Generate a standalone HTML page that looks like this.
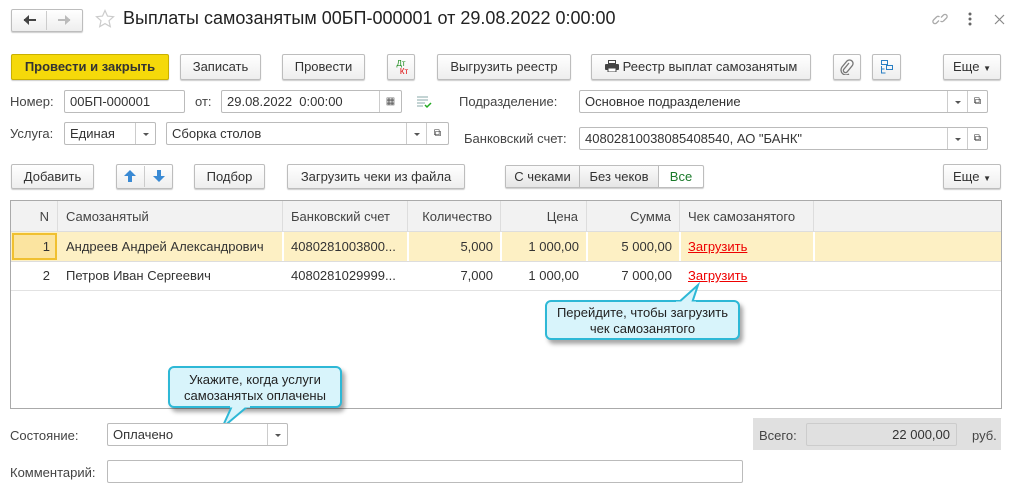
<!DOCTYPE html>
<html><head><meta charset="utf-8"><style>
*{box-sizing:border-box}
body{margin:0;width:1021px;height:488px;background:#fff;font-family:"Liberation Sans",Arial,sans-serif;font-size:13px;color:#333;position:relative;overflow:hidden}
.a{position:absolute}
.btn{position:absolute;border:1px solid #bdbdbd;border-radius:2px;background:linear-gradient(#fff,#eee);box-shadow:0 1px 1px rgba(0,0,0,.2);text-align:center;color:#333;font-size:13px}
.inp{position:absolute;border:1px solid #bbb;border-radius:2px;background:#fff;padding:3px 0 0 5px;font-size:13px;color:#333;white-space:nowrap}
.dd{position:absolute;top:0;bottom:0;border-left:1px solid #ccc;width:20px}
.dd:after{content:"";position:absolute;left:7px;top:10px;border:3px solid transparent;border-top:3px solid #555}
.lb{position:absolute;color:#444;font-size:13px}
.th{position:absolute;top:0;height:31px;line-height:31px;border-right:1px solid #ddd;padding:0 8px;color:#444}
.td{position:absolute;height:29px;line-height:29px;padding:0 8px;color:#333}
.tip{position:absolute;background:#d8f4fb;border:2px solid #2eb8d6;border-radius:6px;box-shadow:3px 4px 4px rgba(0,0,0,.35);text-align:center;color:#222;font-size:13px;line-height:16px}
</style></head><body>
<!-- header -->
<div class="btn" style="left:11px;top:9px;width:72px;height:23px;"></div>
<div class="a" style="left:46px;top:11px;width:1px;height:19px;background:#ccc"></div>
<svg class="a" style="left:23px;top:14px" width="14" height="12"><path d="M1 6h12" stroke="#444" stroke-width="2"/><path d="M0.5 6L6 1v10z" fill="#444"/></svg>
<svg class="a" style="left:57px;top:14px" width="14" height="12"><path d="M1 6h12" stroke="#bbb" stroke-width="2"/><path d="M13.5 6L8 1v10z" fill="#bbb"/></svg>
<svg class="a" style="left:95px;top:9px" width="20" height="20"><path d="M10 1.5l2.5 5.6 6 .6-4.5 4 1.3 6-5.3-3.1-5.3 3.1 1.3-6-4.5-4 6-.6z" fill="none" stroke="#ccc" stroke-width="1.2"/></svg>
<div class="a" style="left:123px;top:8px;font-size:18px;color:#222">Выплаты самозанятым 00БП-000001 от 29.08.2022 0:00:00</div>
<svg class="a" style="left:932px;top:11px" width="16" height="16"><g fill="none" stroke="#aaa" stroke-width="1.3"><path d="M7 9.5l-2.5 2.5a2 2 0 0 1-3-3l3-3a2 2 0 0 1 3 0"/><path d="M9 6.5l2.5-2.5a2 2 0 0 1 3 3l-3 3a2 2 0 0 1-3 0"/></g></svg>
<svg class="a" style="left:968px;top:12px" width="4" height="14"><circle cx="2" cy="2" r="1.5" fill="#666"/><circle cx="2" cy="7" r="1.5" fill="#666"/><circle cx="2" cy="12" r="1.5" fill="#666"/></svg>
<svg class="a" style="left:994px;top:14px" width="11" height="11"><path d="M1 1l9 9M10 1l-9 9" stroke="#888" stroke-width="1.2"/></svg>
<!-- toolbar -->
<div class="btn" style="left:11px;top:54px;width:158px;height:26px;line-height:24px;background:#f5d90a;border-color:#c9b000;font-weight:bold;color:#333">Провести и закрыть</div>
<div class="btn" style="left:180px;top:54px;width:81px;height:26px;line-height:24px">Записать</div>
<div class="btn" style="left:282px;top:54px;width:83px;height:26px;line-height:24px">Провести</div>
<div class="btn" style="left:387px;top:54px;width:28px;height:26px;font-size:8px;line-height:8px;padding-top:5px"><span style="color:#1a8a1a">Дт</span><br><span style="color:#d00;margin-left:6px">Кт</span></div>
<div class="btn" style="left:437px;top:54px;width:134px;height:26px;line-height:24px">Выгрузить реестр</div>
<div class="btn" style="left:591px;top:54px;width:220px;height:26px;line-height:24px"><svg width="14" height="12" style="vertical-align:-1px;margin-right:4px"><rect x="3.5" y="0.5" width="7" height="3" fill="none" stroke="#444"/><rect x="0" y="4" width="14" height="6" rx="1" fill="#444"/><rect x="3" y="8" width="8" height="4" fill="#fff" stroke="#444"/></svg>Реестр выплат самозанятым</div>
<div class="btn" style="left:833px;top:54px;width:28px;height:26px"><svg width="14" height="16" style="margin-top:4px" viewBox="0 0 14 16"><path d="M9 4L4 10a2 2 0 0 0 3 3l5-6a3.5 3.5 0 0 0-5-5L2 8a5 5 0 0 0 7 7" fill="none" stroke="#777" stroke-width="1.3"/></svg></div>
<div class="btn" style="left:872px;top:54px;width:29px;height:26px"><svg width="16" height="16" style="margin-top:4px" viewBox="0 0 16 16" fill="none" stroke="#2a7fc4"><rect x="2.5" y="1.5" width="6" height="4"/><rect x="7.5" y="6.5" width="6" height="4"/><path d="M2.5 7v7h4M2.5 10h3"/></svg></div>
<div class="btn" style="left:943px;top:54px;width:58px;height:26px;line-height:24px">Еще <span style="font-size:8px">▼</span></div>
<!-- row 1 -->
<div class="lb" style="left:10px;top:94px">Номер:</div>
<div class="inp" style="left:64px;top:90px;width:121px;height:23px">00БП-000001</div>
<div class="lb" style="left:195px;top:94px">от:</div>
<div class="inp" style="left:221px;top:90px;width:181px;height:23px">29.08.2022&nbsp; 0:00:00<div class="a" style="right:0;top:0;bottom:0;width:22px;border-left:1px solid #ccc;font-size:10px;text-align:center;line-height:21px;color:#555;padding:0">▦</div></div>
<svg class="a" style="left:416px;top:95px" width="16" height="14"><path d="M1 2h11M1 5h11M1 8h8M1 11h6" stroke="#8aa" /><path d="M9 10l2 2 4-4" stroke="#2a2" fill="none" stroke-width="1.5"/></svg>
<div class="lb" style="left:459px;top:94px">Подразделение:</div>
<div class="inp" style="left:579px;top:90px;width:409px;height:23px">Основное подразделение<div class="dd" style="right:20px"></div><div class="a" style="right:0;top:0;bottom:0;width:20px;border-left:1px solid #ccc;font-size:10px;text-align:center;line-height:21px;padding:0">⧉</div></div>
<!-- row 2 -->
<div class="lb" style="left:10px;top:126px">Услуга:</div>
<div class="inp" style="left:64px;top:122px;width:92px;height:23px">Единая<div class="dd" style="right:0"></div></div>
<div class="inp" style="left:166px;top:122px;width:283px;height:23px">Сборка столов<div class="dd" style="right:22px"></div><div class="a" style="right:0;top:0;bottom:0;width:22px;border-left:1px solid #ccc;font-size:10px;text-align:center;line-height:21px;padding:0">⧉</div></div>
<div class="lb" style="left:464px;top:131px">Банковский счет:</div>
<div class="inp" style="left:579px;top:127px;width:409px;height:23px">40802810038085408540, АО "БАНК"<div class="dd" style="right:20px"></div><div class="a" style="right:0;top:0;bottom:0;width:20px;border-left:1px solid #ccc;font-size:10px;text-align:center;line-height:21px;padding:0">⧉</div></div>
<!-- row buttons -->
<div class="btn" style="left:11px;top:164px;width:83px;height:25px;line-height:23px">Добавить</div>
<div class="btn" style="left:116px;top:164px;width:57px;height:25px"></div>
<div class="a" style="left:144px;top:166px;width:1px;height:21px;background:#ccc"></div>
<svg class="a" style="left:123px;top:169px" width="14" height="14"><path d="M7 1L1 7h4v6h4V7h4z" fill="#3a8ad4"/></svg>
<svg class="a" style="left:152px;top:169px" width="14" height="14"><path d="M7 13L1 7h4V1h4v6h4z" fill="#3a8ad4"/></svg>
<div class="btn" style="left:194px;top:164px;width:71px;height:25px;line-height:23px">Подбор</div>
<div class="btn" style="left:287px;top:164px;width:178px;height:25px;line-height:23px">Загрузить чеки из файла</div>
<div class="btn" style="left:505px;top:165px;width:199px;height:23px;background:#fff"></div>
<div class="a" style="left:506px;top:166px;width:74px;height:21px;background:linear-gradient(#fafafa,#e6e6e6);border-right:1px solid #bbb;text-align:center;line-height:21px">С чеками</div>
<div class="a" style="left:580px;top:166px;width:79px;height:21px;background:linear-gradient(#fafafa,#e6e6e6);border-right:1px solid #bbb;text-align:center;line-height:21px">Без чеков</div>
<div class="a" style="left:659px;top:166px;width:44px;height:21px;text-align:center;line-height:21px;color:#1a7a2a">Все</div>
<div class="btn" style="left:943px;top:164px;width:58px;height:25px;line-height:23px">Еще <span style="font-size:8px">▼</span></div>
<!-- table -->
<div class="a" style="left:10px;top:200px;width:992px;height:209px;border:1px solid #aaa;background:#fff">
 <div class="a" style="left:0;top:0;right:0;height:31px;background:#f2f2f2;border-bottom:1px solid #ddd"></div>
 <div class="th" style="left:0;width:47px;text-align:right">N</div>
 <div class="th" style="left:47px;width:225px">Самозанятый</div>
 <div class="th" style="left:272px;width:125px">Банковский счет</div>
 <div class="th" style="left:397px;width:93px;text-align:right">Количество</div>
 <div class="th" style="left:490px;width:86px;text-align:right">Цена</div>
 <div class="th" style="left:576px;width:93px;text-align:right">Сумма</div>
 <div class="th" style="left:669px;width:134px">Чек самозанятого</div>
 <div class="a" style="left:0;top:31px;right:0;height:30px;background:#fdf0c4;border-bottom:1px solid #ddd"></div>
 <div class="a" style="left:1px;top:32px;width:45px;height:27px;background:#fbe4a0;border:2px solid #f0c030"></div>
 <div class="a" style="left:271px;top:31px;width:2px;height:29px;background:#fff"></div>
 <div class="a" style="left:396px;top:31px;width:2px;height:29px;background:#fff"></div>
 <div class="a" style="left:489px;top:31px;width:2px;height:29px;background:#fff"></div>
 <div class="a" style="left:575px;top:31px;width:2px;height:29px;background:#fff"></div>
 <div class="a" style="left:668px;top:31px;width:2px;height:29px;background:#fff"></div>
 <div class="a" style="left:802px;top:31px;width:2px;height:29px;background:#fff"></div>
 <div class="td" style="left:0;top:31px;width:47px;text-align:right">1</div>
 <div class="td" style="left:47px;top:31px">Андреев Андрей Александрович</div>
 <div class="td" style="left:272px;top:31px">4080281003800...</div>
 <div class="td" style="left:397px;top:31px;width:93px;text-align:right">5,000</div>
 <div class="td" style="left:490px;top:31px;width:86px;text-align:right">1 000,00</div>
 <div class="td" style="left:576px;top:31px;width:93px;text-align:right">5 000,00</div>
 <div class="td" style="left:669px;top:31px;color:#e00;text-decoration:underline">Загрузить</div>
 <div class="a" style="left:0;top:89px;right:0;height:1px;background:#e2e2e2"></div>
 <div class="td" style="left:0;top:60px;width:47px;text-align:right">2</div>
 <div class="td" style="left:47px;top:60px">Петров Иван Сергеевич</div>
 <div class="td" style="left:272px;top:60px">4080281029999...</div>
 <div class="td" style="left:397px;top:60px;width:93px;text-align:right">7,000</div>
 <div class="td" style="left:490px;top:60px;width:86px;text-align:right">1 000,00</div>
 <div class="td" style="left:576px;top:60px;width:93px;text-align:right">7 000,00</div>
 <div class="td" style="left:669px;top:60px;color:#e00;text-decoration:underline">Загрузить</div>
</div>
<!-- tooltips -->
<div class="tip" style="left:545px;top:300px;width:195px;height:40px;padding-top:3px">Перейдите, чтобы загрузить<br>чек самозанятого</div>
<svg class="a" style="left:670px;top:282px" width="40" height="22"><path d="M8 21L28 3L22 21" fill="#d8f4fb" stroke="#2eb8d6" stroke-width="2"/><path d="M6 21h20" stroke="#d8f4fb" stroke-width="3"/></svg>
<div class="tip" style="left:168px;top:366px;width:174px;height:42px;padding-top:4px">Укажите, когда услуги<br>самозанятых оплачены</div>
<svg class="a" style="left:218px;top:404px" width="40" height="26"><path d="M14 2L4 24L30 2" fill="#d8f4fb" stroke="#2eb8d6" stroke-width="2"/><path d="M12 2h20" stroke="#d8f4fb" stroke-width="3"/></svg>
<!-- bottom -->
<div class="lb" style="left:10px;top:428px">Состояние:</div>
<div class="inp" style="left:107px;top:423px;width:181px;height:23px">Оплачено<div class="dd" style="right:0"></div></div>
<div class="a" style="left:753px;top:418px;width:248px;height:32px;background:#e0e0e0"></div>
<div class="lb" style="left:759px;top:428px">Всего:</div>
<div class="a" style="left:806px;top:423px;width:151px;height:23px;border:1px solid #ccc;border-radius:2px;text-align:right;padding:3px 6px 0 0;color:#333">22 000,00</div>
<div class="lb" style="left:972px;top:428px">руб.</div>
<div class="lb" style="left:10px;top:465px">Комментарий:</div>
<div class="inp" style="left:107px;top:460px;width:636px;height:23px"></div>
</body></html>
